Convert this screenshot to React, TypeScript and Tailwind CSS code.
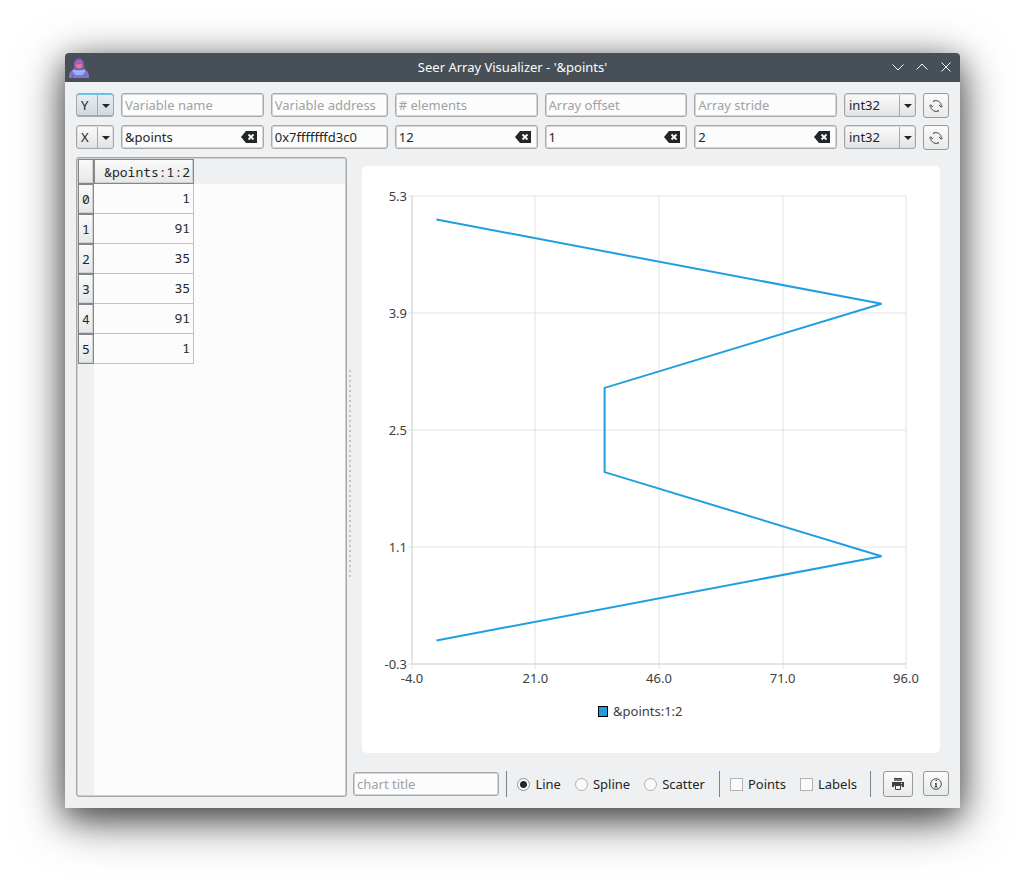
import React from 'react';

interface FieldRow {
  axis: string;
  name: string;
  address: string;
  count: string;
  offset: string;
  stride: string;
  active: boolean;
}

const rows: FieldRow[] = [
  { axis: 'Y', name: '', address: '', count: '', offset: '', stride: '', active: true },
  { axis: 'X', name: '&points', address: '0x7fffffffd3c0', count: '12', offset: '1', stride: '2', active: false },
];

const values = [1, 91, 35, 35, 91, 1];

const inputClass =
  'h-6 w-full rounded-[3px] border border-[#a6a8aa] bg-[#fcfcfc] px-[3px] text-[13px] leading-5 text-[#232629] shadow-[inset_0_0_0_1px_#d4d5d6] placeholder:text-[#a0a2a4] outline-none';

const AppIcon = () => (
  <svg width="20" height="20" viewBox="0 0 20 20" aria-hidden="true">
    <path d="M10 0C8.500.3 5 2 4.900 6.500c0 2 .3 3.500-.4 5h11c-.7-1.500-.4-3-.4-5C15 2 11.500.3 10 0z" fill="#7860c4" />
    <path d="M0 20c0-4.500.8-7 4.500-8.200h11C19.200 13 20 15.500 20 20z" fill="#8474cc" />
    <ellipse cx="10" cy="6.800" rx="3.400" ry="4" fill="#d8709c" />
    <path d="M7 5.500C7.800 3.200 12.200 3.200 13 5.500l-1 .6H8z" fill="#b8559a" />
    <path d="M8.500 7.500h3v1.500h-3z" fill="#f08a8c" />
    <path d="M4 11c3 1.600 9 1.600 12 0l.5 3c-1.300.9-1.800 1.600-2.500 2.700-2.400.8-5.600.8-8 0-.7-1.100-1.200-1.800-2.500-2.700z" fill="#8fa8f2" />
    <path d="M4.500 12.700c3.500 1.500 7.500 1.500 11 0M6 15.200c2.500.8 5.500.8 8 0" stroke="#a9c0fa" fill="none" />
    <path d="M3.500 17v3M16.500 17v3" stroke="#6f60bc" />
  </svg>
);

const ClearIcon = () => (
  <svg width="16" height="12" viewBox="0 0 16 12" aria-hidden="true">
    <path d="M0 6l5-6h11v12H5z" fill="#232629" />
    <path d="M7.500 3.500l5 5M12.500 3.500l-5 5" stroke="#fcfcfc" strokeWidth="1.800" />
  </svg>
);

const RefreshIcon = () => (
  <svg width="14" height="14" viewBox="0 0 14 14" fill="none" stroke="#4d5052" aria-hidden="true">
    <path d="M4 2.500A5.300 5.300 0 0 1 12.300 7.500M10 11.500A5.300 5.300 0 0 1 1.700 6.500" />
    <path d="M10 6l2.300 2.300L14 6.500M4 8L1.700 5.700 0 7.500M4 2.500l1.500-.8M10 11.500l-1.500.8" />
  </svg>
);

const PrintIcon = () => (
  <svg width="12" height="12" viewBox="0 0 12 12" fill="none" aria-hidden="true">
    <path d="M2 0h8v3H2z" fill="#6d7072" />
    <path d="M2 .5h8" stroke="#3c3f42" />
    <path d="M0 4h12v5h-2V7H2v2H0z" fill="#3c3f42" />
    <path d="M2.500 7.500h7M3.500 8v3.500h5V8" fill="#f4f4f5" stroke="#3c3f42" />
    <path d="M9 5.500h1" stroke="#fcfcfc" />
  </svg>
);

const InfoIcon = () => (
  <svg width="12" height="12" viewBox="0 0 12 12" fill="none" stroke="#4a4d50" aria-hidden="true">
    <circle cx="6" cy="6" r="5.300" />
    <path d="M5.500 2.500h1.500M5 5.500h1M4.500 9h3" />
    <path d="M6 5v4" strokeWidth="1.500" />
  </svg>
);

interface FieldProps {
  label: string;
  value: string;
  clearable?: boolean;
}

const Field: React.FC<FieldProps> = ({ label, value, clearable = true }) => (
  <div className={clearable ? 'relative min-w-0 flex-1' : 'relative w-[117px] shrink-0'}>
    <input className={inputClass} placeholder={label} aria-label={label} defaultValue={value} />
    {clearable && value !== '' && (
      <button className="absolute top-[6px] right-[7px]" aria-label={`Clear ${label}`}>
        <ClearIcon />
      </button>
    )}
  </div>
);

interface ComboProps {
  label: string;
  value: string;
  options: string[];
  className: string;
  active?: boolean;
}

const Combo: React.FC<ComboProps> = ({ label, value, options, className, active }) => (
  <div className={`relative shrink-0 ${className}`}>
    <select
      aria-label={label}
      defaultValue={value}
      className={`h-6 w-full appearance-none rounded-[3px] border border-[#a6a8aa] bg-linear-to-b pl-[4px] text-[13px] leading-5 text-[#232629] outline-none ${
        active
          ? 'from-[#e6eef2] to-[#d0dade] shadow-[inset_0_1px_0_0_#6cc0ee,inset_0_-1px_0_0_#6cb9e2]'
          : 'from-[#fbfbfb] to-[#e2e3e4] shadow-[inset_0_0_0_1px_#dcddde]'
      }`}
    >
      {options.map(option => (
        <option key={option}>{option}</option>
      ))}
    </select>
    <span className="pointer-events-none absolute inset-y-[2px] right-px flex w-4 items-center justify-center border-l border-[#a6a8aa]">
      <svg width="8" height="4" viewBox="0 0 8 4" aria-hidden="true">
        <path d="M0 0h8L4 4z" fill="#232629" />
      </svg>
    </span>
  </div>
);

const toolButton =
  'flex shrink-0 items-center justify-center rounded-[3px] border border-[#97999b] bg-linear-to-b from-[#fbfbfb] to-[#e8e9ea]';

const headerCell =
  'border border-[#858789] bg-linear-to-b from-[#fafafa] to-[#e6e7e8] font-normal shadow-[inset_-1px_-1px_0_0_#cfd0d1]';

const DataTable = () => (
  <div className="w-[271px] shrink-0 overflow-hidden rounded-[3px] border border-[#a6a8aa] bg-[#cdcecf] p-px">
    <table className="h-full w-full table-fixed border-separate border-spacing-0 bg-[#fcfcfc] font-['Noto_Sans_Mono','Liberation_Mono',monospace] text-[13px] leading-4 text-[#232629]">
      <colgroup>
        <col className="w-4" />
        <col className="w-[100px]" />
        <col />
      </colgroup>
      <thead>
        <tr className="h-[25px]">
          <td className={headerCell} />
          <th scope="col" className={`${headerCell} pr-[3px] text-right`}>&amp;points:1:2</th>
          <td className="bg-[#eff0f1]" />
        </tr>
      </thead>
      <tbody>
        {values.map((value, i) => (
          <tr key={i} className="h-[30px]">
            <th scope="row" className={headerCell}>{i}</th>
            <td className="border-r border-b border-[#c0c1c2] pr-[3px] pb-px text-right">{value}</td>
            <td />
          </tr>
        ))}
        <tr>
          <td className="bg-[#eff0f1]" />
          <td colSpan={2} />
        </tr>
      </tbody>
    </table>
  </div>
);

// Plot area inside the chart card
const plot = { left: 50, right: 544, top: 30, bottom: 498 };
const xTicks = [-3.95, 21, 46, 71, 95.95];
const yTicks = [5.28, 3.89, 2.5, 1.11, -0.28];

const xPos = (v: number) => plot.left + ((v + 3.95) / 99.9) * (plot.right - plot.left);
const yPos = (v: number) => plot.bottom - ((v + 0.28) / 5.56) * (plot.bottom - plot.top);

const Chart = () => (
  <svg viewBox="0 0 578 587" className="min-h-0 w-full flex-1 rounded-[5px] bg-white" role="img" aria-label="&points:1:2">
    <g stroke="#e2e2e2">
      {xTicks.map(t => (
        <line key={t} x1={Math.round(xPos(t))} x2={Math.round(xPos(t))} y1={plot.top} y2={plot.bottom + 5} />
      ))}
      {yTicks.map(t => (
        <line key={t} x1={plot.left - 4} x2={plot.right} y1={Math.round(yPos(t))} y2={Math.round(yPos(t))} />
      ))}
    </g>
    <path d={`M${plot.left} ${plot.top}V${plot.bottom}H${plot.right}`} fill="none" stroke="#d6d6d6" />
    <g fontSize="13" fill="#404044">
      {xTicks.map(t => (
        <text key={t} x={xPos(t)} y="517" textAnchor="middle">{Math.round(t).toFixed(1)}</text>
      ))}
      {yTicks.map(t => (
        <text key={t} x="45" y={yPos(t) + 5} textAnchor="end">{t.toFixed(1)}</text>
      ))}
      <text x="251" y="550">&amp;points:1:2</text>
    </g>
    <rect x="236.500" y="540.500" width="9" height="10" fill="#209fdf" stroke="#000" />
    <polyline
      points={values.map((v, i) => `${xPos(v)},${yPos(i)}`).join(' ')}
      fill="none"
      stroke="#209fdf"
      strokeWidth="2"
    />
  </svg>
);

const Separator = () => <div className="h-[26px] w-px shrink-0 bg-[#7f8385]" />;

const radioClass =
  'size-[13px] shrink-0 appearance-none rounded-full border border-[#aeb0b2] bg-[#fafafa] checked:border-[#8e9092] checked:bg-[radial-gradient(circle,#232629_3px,#fafafa_4px)]';

const OptionBar = () => (
  <div className="flex h-[26px] items-center">
    <input className={`${inputClass} min-w-0 flex-1`} placeholder="chart title" aria-label="chart title" />
    <div className="ml-[7px] flex shrink-0 items-center">
      <Separator />
      <div className="flex items-center pl-[10px]">
        {['Line', 'Spline', 'Scatter'].map(mode => (
          <label key={mode} className="mr-[14px] flex items-center gap-[5px]">
            <input type="radio" name="mode" defaultChecked={mode === 'Line'} className={radioClass} />
            {mode}
          </label>
        ))}
      </div>
      <Separator />
      <div className="flex items-center gap-[14px] pr-[13px] pl-[10px]">
        {['Points', 'Labels'].map(option => (
          <label key={option} className="flex items-center gap-[5px]">
            <input type="checkbox" className="size-[13px] shrink-0 appearance-none border border-[#b0b2b4] bg-[#fafafa] checked:bg-[#232629]" />
            {option}
          </label>
        ))}
      </div>
      <Separator />
      <button className={`${toolButton} ml-3 h-[26px] w-[30px] to-[#dfe0e1]`} aria-label="Print">
        <PrintIcon />
      </button>
      <button className={`${toolButton} ml-[10px] h-[25px] w-[26px] self-start`} aria-label="Info">
        <InfoIcon />
      </button>
    </div>
  </div>
);

const TitleBar = () => (
  <header className="flex h-[29px] shrink-0 items-center rounded-t-[4px] bg-[#475057] px-2 text-[#fcfcfc]">
    <div className="flex flex-1">
      <div className="-ml-1">
        <AppIcon />
      </div>
    </div>
    <h1 className="pb-px text-[13px] leading-5">Seer Array Visualizer - '&amp;points'</h1>
    <div className="flex flex-1 items-center justify-end gap-3 pb-px">
      <button aria-label="Minimize">
        <svg width="12" height="12" viewBox="0 0 12 12" fill="none" stroke="#fcfcfc"><path d="M.5 3.500L6 9l5.500-5.500" /></svg>
      </button>
      <button aria-label="Maximize">
        <svg width="12" height="12" viewBox="0 0 12 12" fill="none" stroke="#fcfcfc"><path d="M.5 8.500L6 3l5.500 5.500" /></svg>
      </button>
      <button aria-label="Close">
        <svg width="12" height="12" viewBox="0 0 12 12" fill="none" stroke="#fcfcfc"><path d="M1.500 1.500l9 9M10.500 1.500l-9 9" /></svg>
      </button>
    </div>
  </header>
);

const App: React.FC = () => {
  return (
    <div className="flex min-h-screen flex-col bg-white px-[65px] pt-[53px] pb-[77px] font-['Noto_Sans',sans-serif] text-[13px] leading-5 text-[#232629]">
      <div className="flex flex-1 flex-col rounded-t-[4px] bg-[#eff0f1] shadow-[0_12px_48px_rgba(0,0,0,0.6),0_8px_28px_rgba(0,0,0,0.4)]">
        <TitleBar />
        <main className="flex flex-1 flex-col gap-[7px] p-[11px]">
          {rows.map(row => (
            <div key={row.axis} className="flex h-[25px] gap-[7px]">
              <Combo label="Axis" value={row.axis} options={['X', 'Y']} className="w-[38px]" active={row.active} />
              <Field label="Variable name" value={row.name} />
              <Field label="Variable address" value={row.address} clearable={false} />
              <Field label="# elements" value={row.count} />
              <Field label="Array offset" value={row.offset} />
              <Field label="Array stride" value={row.stride} />
              <Combo label="Type" value="int32" options={['int8', 'int16', 'int32', 'int64']} className="w-[72px]" />
              <button className={`${toolButton} h-[25px] w-[26px]`} aria-label="Refresh">
                <RefreshIcon />
              </button>
            </div>
          ))}
          <div className="flex flex-1">
            <DataTable />
            <div className="flex w-[6px] shrink-0 items-center justify-center pb-[6px]">
              <div className="h-[208px] w-[2px] bg-[repeating-linear-gradient(to_bottom,#c4c6c8_0px,#c4c6c8_2px,transparent_2px,transparent_5px)]" />
            </div>
            <div className="flex min-w-0 flex-1 flex-col">
              <div className="flex min-h-0 flex-1 flex-col p-[9px]">
                <Chart />
              </div>
              <div className="pt-[9px]">
                <OptionBar />
              </div>
            </div>
          </div>
        </main>
      </div>
    </div>
  );
};

export default App;
